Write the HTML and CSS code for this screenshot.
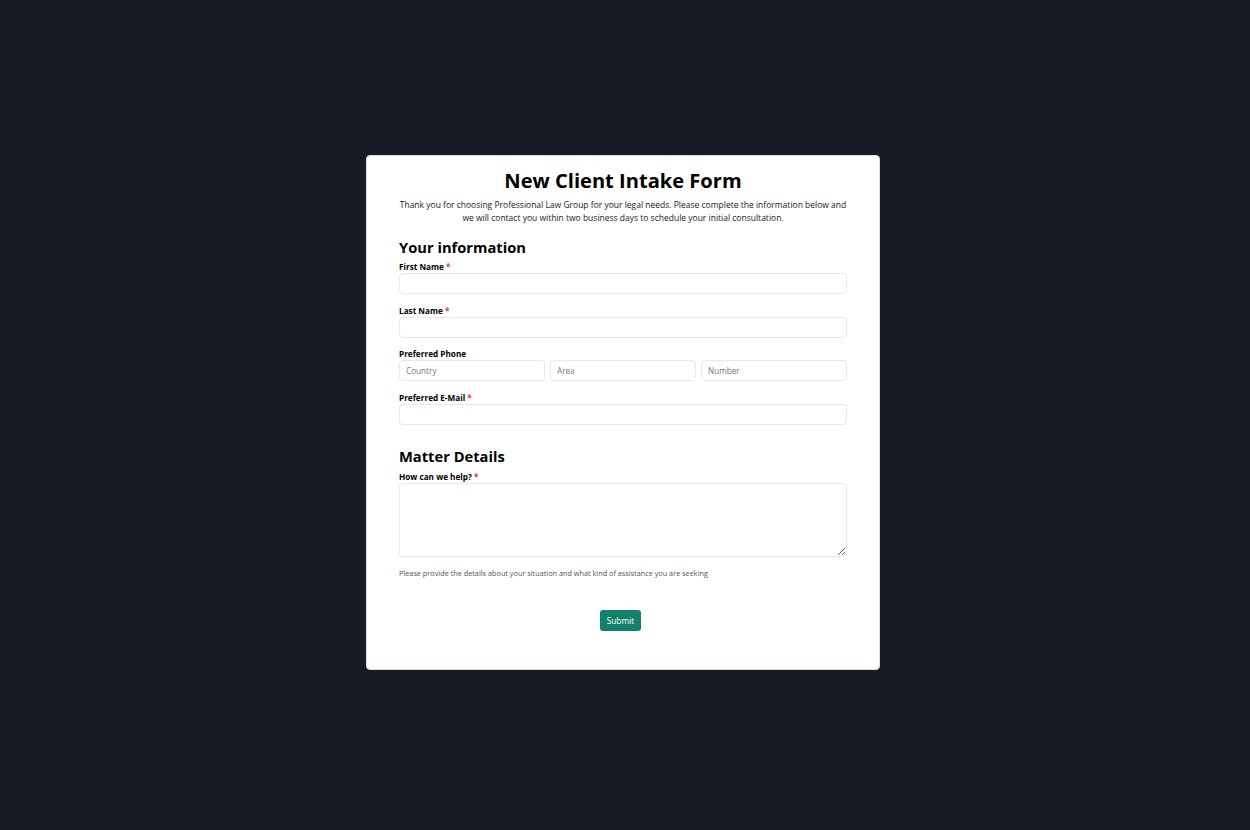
FILE: index.html
```html
<!DOCTYPE html>
<html lang="en">
<head>
<meta charset="utf-8">
<title>New Client Intake Form</title>
<link rel="stylesheet" href="styles.css">
</head>
<body>
<div class="page">
  <form class="card">
    <h1 class="title">New Client Intake Form</h1>
    <p class="intro">Thank you for choosing Professional Law Group for your legal needs. Please complete the information below and we will contact you within two business days to schedule your initial consultation.</p>

    <h2 class="section">Your information</h2>
    <div class="field">
      <label class="label">First Name <span class="req">*</span></label>
      <input class="input" type="text">
    </div>
    <div class="field">
      <label class="label">Last Name <span class="req">*</span></label>
      <input class="input" type="text">
    </div>
    <div class="field">
      <label class="label">Preferred Phone</label>
      <div class="phone">
        <input class="input" type="text" placeholder="Country">
        <input class="input" type="text" placeholder="Area">
        <input class="input" type="text" placeholder="Number">
      </div>
    </div>
    <div class="field">
      <label class="label">Preferred E-Mail <span class="req">*</span></label>
      <input class="input" type="email">
    </div>

    <h2 class="section section-gap">Matter Details</h2>
    <div class="field">
      <label class="label">How can we help? <span class="req">*</span></label>
      <textarea class="textarea"></textarea>
      <p class="help">Please provide the details about your situation and what kind of assistance you are seeking</p>
    </div>

    <div class="actions">
      <button class="submit" type="button">Submit</button>
    </div>
  </form>
</div>
</body>
</html>
```

FILE: styles.css
```css
* { box-sizing: border-box; }

html, body {
  margin: 0;
  height: 100%;
}

body {
  background: #171b26;
  font-family: "Open Sans", "Noto Sans", sans-serif;
  color: #111;
}

.page {
  display: flex;
  justify-content: center;
  padding-top: 155px;
  padding-right: 4px;
}

.card {
  width: 514px;
  background: #fff;
  border: 1px solid #d9dce1;
  border-radius: 4px;
  padding: 11px 32px 38px;
  display: flex;
  flex-direction: column;
}

.title {
  margin: 0;
  font-size: 20.1px;
  line-height: 28px;
  font-weight: 700;
  text-align: center;
  color: #000;
}

.intro {
  margin: 3px 0 0;
  font-size: 8.5px;
  line-height: 13px;
  text-align: center;
  color: #1a1a1a;
}

.section {
  margin: 13px 0 4px;
  font-size: 14.7px;
  line-height: 20px;
  font-weight: 700;
  color: #000;
}

.section-gap {
  margin-top: 21px;
  margin-bottom: 5px;
}

.field {
  display: flex;
  flex-direction: column;
}

.field + .field { margin-top: 10.5px; }

.label {
  font-size: 8.2px;
  line-height: 12px;
  font-weight: 700;
  color: #000;
}

.req { color: #e53e3e; }

.input {
  height: 21px;
  width: 100%;
  border: 1px solid #e6e8eb;
  border-radius: 4px;
  padding: 0 6px;
  font-family: inherit;
  font-size: 8.2px;
  color: #333;
  background: #fff;
  outline: none;
}

.input::placeholder { color: #777; }

.phone {
  display: grid;
  grid-template-columns: 1fr 1fr 1fr;
  gap: 5px;
}

.textarea {
  height: 74px;
  width: 100%;
  border: 1px solid #e6e8eb;
  border-radius: 4px;
  font-family: inherit;
  resize: vertical;
  outline: none;
}

.help {
  margin: 11px 0 0;
  font-size: 7.3px;
  line-height: 11px;
  color: #555;
}

.actions {
  display: flex;
  justify-content: center;
  margin-top: 31px;
}

.submit {
  height: 21px;
  padding: 0 6.5px;
  margin-right: 5px;
  background: #12806a;
  color: #fff;
  border: none;
  border-radius: 3px;
  font-family: inherit;
  font-size: 8.4px;
  cursor: pointer;
}
```
